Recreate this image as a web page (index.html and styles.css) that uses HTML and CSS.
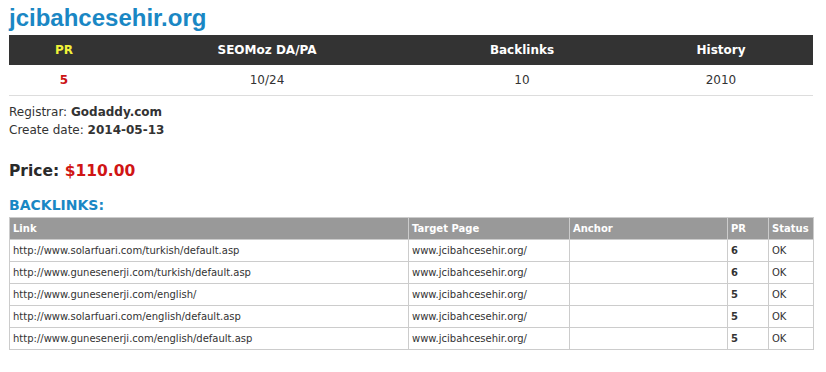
FILE: index.html
```html
<!DOCTYPE html>
<html>
<head>
<meta charset="utf-8">
<link rel="stylesheet" href="styles.css">
</head>
<body>
<div class="page">
  <h1 class="domain">jcibahcesehir.org</h1>
  <table class="stats">
    <colgroup><col class="c1"><col class="c2"><col class="c3"><col class="c4"></colgroup>
    <thead>
      <tr><th class="pr">PR</th><th>SEOMoz DA/PA</th><th>Backlinks</th><th>History</th></tr>
    </thead>
    <tbody>
      <tr><td class="prval">5</td><td>10/24</td><td>10</td><td>2010</td></tr>
    </tbody>
  </table>
  <div class="info">
    <div>Registrar: <b>Godaddy.com</b></div>
    <div>Create date: <b>2014-05-13</b></div>
  </div>
  <div class="price">Price: <span class="amount">$110.00</span></div>
  <h2 class="section">BACKLINKS:</h2>
  <table class="links">
    <colgroup><col class="l1"><col class="l2"><col class="l3"><col class="l4"><col class="l5"></colgroup>
    <thead>
      <tr><th>Link</th><th>Target Page</th><th>Anchor</th><th>PR</th><th>Status</th></tr>
    </thead>
    <tbody>
      <tr><td>http://www.solarfuari.com/turkish/default.asp</td><td>www.jcibahcesehir.org/</td><td></td><td class="b">6</td><td>OK</td></tr>
      <tr><td>http://www.gunesenerji.com/turkish/default.asp</td><td>www.jcibahcesehir.org/</td><td></td><td class="b">6</td><td>OK</td></tr>
      <tr><td>http://www.gunesenerji.com/english/</td><td>www.jcibahcesehir.org/</td><td></td><td class="b">5</td><td>OK</td></tr>
      <tr><td>http://www.solarfuari.com/english/default.asp</td><td>www.jcibahcesehir.org/</td><td></td><td class="b">5</td><td>OK</td></tr>
      <tr><td>http://www.gunesenerji.com/english/default.asp</td><td>www.jcibahcesehir.org/</td><td></td><td class="b">5</td><td>OK</td></tr>
    </tbody>
  </table>
</div>
</body>
</html>
```
FILE: styles.css
```css
html, body { margin: 0; padding: 0; background: #fff; }
body { font-family: "DejaVu Sans", sans-serif; color: #333; }
.page { width: 804px; padding: 4px 0 0 9px; }

.domain {
  margin: 0 0 3px 0;
  font-family: "Liberation Sans", Arial, sans-serif;
  font-size: 24px;
  font-weight: bold;
  line-height: 28px;
  color: #1a87c4;
}

.stats { width: 804px; border-collapse: collapse; table-layout: fixed; font-size: 12px; }
.stats .c1 { width: 110px; }
.stats .c2 { width: 296px; }
.stats .c3 { width: 214px; }
.stats .c4 { width: 184px; }
.stats th {
  background: #333;
  color: #fff;
  font-weight: bold;
  height: 30px;
  padding: 0;
  text-align: center;
}
.stats th.pr { color: #f2f23a; }
.stats td {
  height: 30px;
  padding: 0;
  text-align: center;
  color: #333;
  border-bottom: 1px solid #ddd;
}
.stats td.prval { color: #cc1414; font-weight: bold; }

.info { margin-top: 7px; font-size: 12px; line-height: 18px; }
.info b { font-weight: bold; }

.price { margin-top: 22px; font-size: 15.5px; font-weight: bold; line-height: 20px; color: #2a2a2a; }
.price .amount { color: #d01515; }

.section {
  margin: 15px 0 3px 0;
  font-size: 14px;
  font-weight: bold;
  line-height: 18px;
  color: #1a87c4;
}

.links { width: 804px; border-collapse: collapse; table-layout: fixed; font-size: 10px; }
.links .l1 { width: 399px; }
.links .l2 { width: 161px; }
.links .l3 { width: 158px; }
.links .l4 { width: 41px; }
.links .l5 { width: 45px; }
.links th {
  background: #999;
  color: #fff;
  font-weight: bold;
  text-align: left;
  padding: 0 3px;
  height: 21px;
  border: 1px solid #ccc;
}
.links td {
  padding: 0 3px;
  height: 21px;
  border: 1px solid #ccc;
  color: #333;
  white-space: nowrap;
}
.links td.b { font-weight: bold; }
```
